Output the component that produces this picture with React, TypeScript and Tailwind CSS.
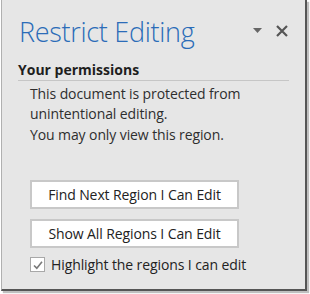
const Check = () => (
  <svg width="12" height="12" viewBox="0 0 12 12" fill="none">
    <path d="M2 6.5 L4.8 9.2 L10 2.8" stroke="#7a7a7a" strokeWidth="1.6" />
  </svg>
);

export default function App() {
  return (
    <div className="w-[310px] h-[294px] bg-white" style={{ fontFamily: '"Open Sans", "Noto Sans", sans-serif' }}>
      <div className="ml-[1px] w-[306px] h-[291px] bg-[#e6e6e6] border-l border-l-[#b0b0b0] border-r-2 border-b-2 border-[#555] shadow-[2px_2px_1px_rgba(0,0,0,0.25)] flex flex-col">
        <div className="flex items-start justify-between pl-[17px] pr-[17px] pt-[14px]">
          <h1 className="text-[27px] leading-[36px] font-light text-[#2b6cb8] tracking-[-0.3px]">Restrict Editing</h1>
          <div className="flex items-center gap-[13px] mt-[11px] text-[#555]">
            <svg width="10" height="6" viewBox="0 0 10 6">
              <path d="M0 0 H9 L4.5 5 Z" fill="#666" />
            </svg>
            <svg width="12" height="12" viewBox="0 0 12 12">
              <path d="M1 1 L11 11 M11 1 L1 11" stroke="#555" strokeWidth="2.2" />
            </svg>
          </div>
        </div>
        <div className="mx-[16px] mt-[10px] pb-[1px] border-b border-[#c6c6c6]">
          <h2 className="text-[14px] leading-[19px] font-bold text-[#1e1e1e]">Your permissions</h2>
        </div>
        <div className="pl-[28px] pr-[12px] pt-[3px] text-[14px] leading-[20px] text-[#2e2e2e] tracking-[-0.1px]">
          <p>This document is protected from unintentional editing.</p>
          <p className="mt-[1px]">You may only view this region.</p>
        </div>
        <div className="pl-[28px] mt-[35px] flex flex-col gap-[10px]">
          <button className="h-[29px] w-[209px] bg-white border-2 border-[#c8c8c8] text-[14px] text-[#222] tracking-[-0.1px]">
            Find Next Region I Can Edit
          </button>
          <button className="h-[29px] w-[209px] bg-white border-2 border-[#c8c8c8] text-[14px] text-[#222] tracking-[-0.1px]">
            Show All Regions I Can Edit
          </button>
        </div>
        <label className="pl-[28px] mt-[6px] flex items-center gap-[6px] text-[14px] text-[#222] tracking-[-0.1px]">
          <span className="w-[15px] h-[15px] bg-white border border-[#a8a8a8] flex items-center justify-center">
            <Check />
          </span>
          Highlight the regions I can edit
        </label>
      </div>
    </div>
  );
}
